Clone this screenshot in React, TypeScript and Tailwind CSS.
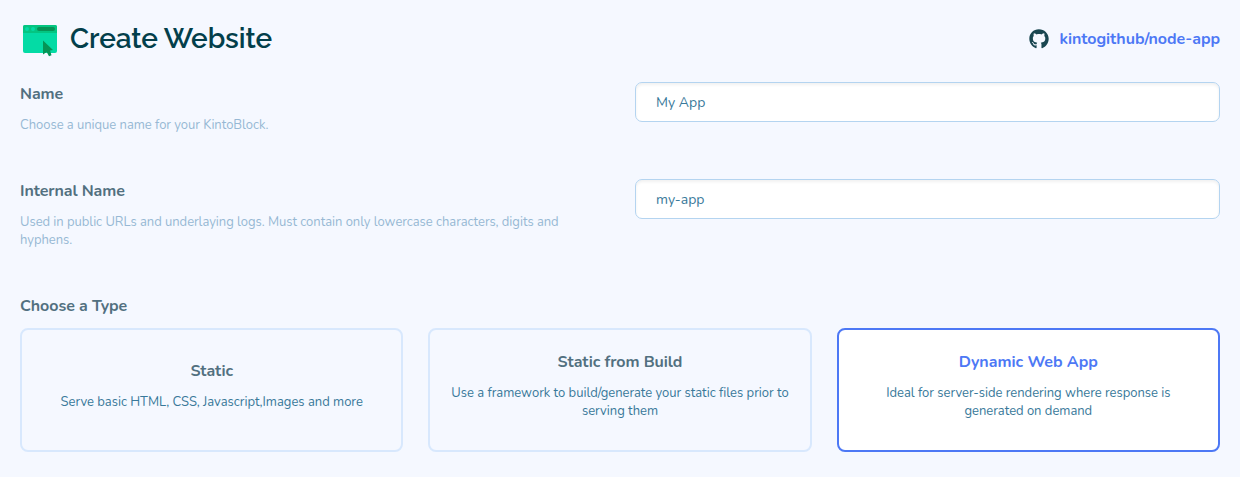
import { FaGithub } from "react-icons/fa";

function WebsiteIcon() {
  return (
    <svg width="36" height="34" viewBox="0 0 36 34" className="relative top-0.5 shrink-0" aria-hidden="true">
      <rect x="1" y="1" width="34" height="28" rx="2" fill="#04dba5" />
      <path d="M1 9V3A2 2 0 0 1 3 1h30A2 2 0 0 1 35 3V9z" fill="#04c581" />
      <circle cx="5" cy="5" r="2" fill="#04dba5" />
      <circle cx="11" cy="5" r="2" fill="#04dba5" />
      <rect x="15" y="3" width="18" height="4" rx="2" fill="#069456" />
      <path d="M21 16.500L31 26L28 26.600L29.500 31.200L27 32.200L24.700 28L21 30.500z" fill="#069456" />
    </svg>
  );
}

type FieldProps = { label: string; hint: string; value: string };

function Field({ label, hint, value }: FieldProps) {
  return (
    <div className="grid grid-cols-2 gap-[30px]">
      <div>
        <label className="block text-base leading-6 font-bold tracking-[-0.08px] text-[#527080]">{label}</label>
        <p className="mt-2.5 text-[13px] leading-[18px] tracking-[-0.04px] text-[#97b8d4]">{hint}</p>
      </div>
      <input
        defaultValue={value}
        className="h-10 w-full rounded-[7px] border border-[#b4d4f0] bg-white px-5 text-sm text-[#39799a] shadow-[inset_0_2px_3px_rgba(0,0,0,0.06)] outline-none"
      />
    </div>
  );
}

type CardProps = { title: string; text: string; selected?: boolean };

function TypeCard({ title, text, selected }: CardProps) {
  return (
    <button
      className={`flex h-[124px] flex-col items-center justify-center rounded-lg border-2 px-5 pb-2.5 ${
        selected ? "border-[#4d78f5] bg-white" : "border-[#d8e8fd]"
      }`}
    >
      <span className={`text-base leading-6 font-bold ${selected ? "text-[#4d78f5]" : "tracking-[-0.06px] text-[#527080]"}`}>{title}</span>
      <span className="mt-2.5 text-[13px] leading-[18px] tracking-[-0.02px] text-[#39799a]">{text}</span>
    </button>
  );
}

export default function App() {
  return (
    <main className="h-[477px] bg-[#f5f8ff] px-5 pt-5 font-['Nunito','Lato',sans-serif]">
      <header className="flex h-[38px] items-center justify-between">
        <div className="flex items-center gap-3 pl-0.5">
          <WebsiteIcon />
          <h1 className="font-['Raleway','Lato',sans-serif] text-[28px] leading-9 font-semibold tracking-[-0.1px] text-[#033f4b]">Create Website</h1>
        </div>
        <a className="flex items-center gap-2.5 text-base font-bold text-[#4d78f5]">
          <FaGithub className="size-5 text-[#194650]" />
          <span className="tracking-[-0.05px]">kintogithub/node-app</span>
        </a>
      </header>
      <section className="mt-6 flex flex-col">
        <div className="h-[97px]">
          <Field label="Name" hint="Choose a unique name for your KintoBlock." value="My App" />
        </div>
        <div className="h-[115px]">
          <Field
            label="Internal Name"
            hint="Used in public URLs and underlaying logs. Must contain only lowercase characters, digits and hyphens."
            value="my-app"
          />
        </div>
      </section>
      <section>
        <h2 className="text-base leading-6 font-bold tracking-[-0.06px] text-[#527080]">Choose a Type</h2>
        <div className="mt-2.5 grid grid-cols-3 gap-[25px]">
          <TypeCard title="Static" text="Serve basic HTML, CSS, Javascript,Images and more" />
          <TypeCard title="Static from Build" text="Use a framework to build/generate your static files prior to serving them" />
          <TypeCard selected title="Dynamic Web App" text="Ideal for server-side rendering where response is generated on demand" />
        </div>
      </section>
    </main>
  );
}
